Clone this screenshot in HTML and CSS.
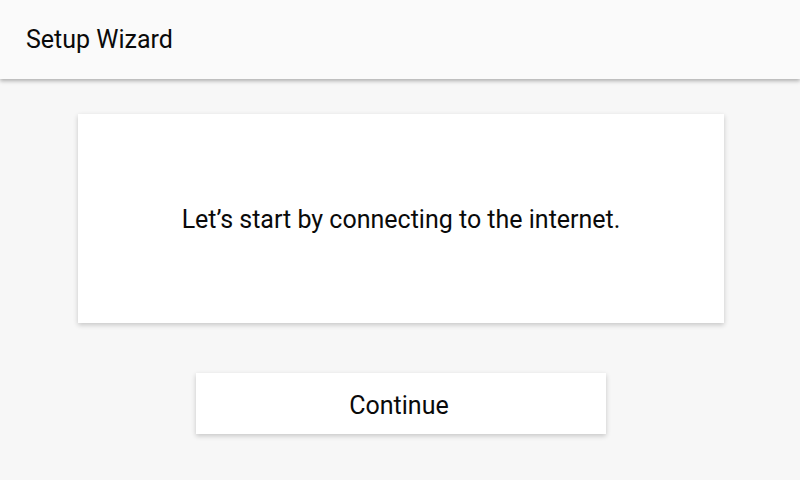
FILE: index.html
```html
<!DOCTYPE html>
<html lang="en">
<head>
  <meta charset="UTF-8">
  <title>Setup Wizard</title>
  <link rel="stylesheet" href="styles.css">
</head>
<body>
  <header class="appbar">
    <h1>Setup Wizard</h1>
  </header>
  <main class="content">
    <div class="card">
      <p>Let’s start by connecting to the internet.</p>
    </div>
    <button type="button" class="btn-continue">Continue</button>
  </main>
</body>
</html>
```
FILE: styles.css
```css
body {
  font-family: Roboto, 'Noto Sans', sans-serif;
  margin: 0;
  background-color: #f7f7f7;
  color: #0a0a0a;
  width: 800px;
  height: 480px;
  overflow: hidden;
}
.appbar {
  height: 79px;
  background: #fafafa;
  display: flex;
  align-items: center;
  padding-left: 26px;
  box-shadow: 0 2px 4px rgba(0, 0, 0, 0.3);
  position: relative;
}
.appbar h1 {
  margin: 0;
  font-size: 25px;
  font-weight: 400;
  color: #0a0a0a;
}
.content {
  display: flex;
  flex-direction: column;
  align-items: center;
  padding-top: 35px;
}
.card {
  width: 646px;
  height: 209px;
  background: #ffffff;
  box-shadow: 0 2px 5px rgba(0, 0, 0, 0.2);
  display: flex;
  align-items: center;
  justify-content: center;
  margin-left: 2px;
}
.card p {
  margin: 0;
  font-size: 25px;
  padding-top: 2px;
}
.btn-continue {
  margin-top: 50px;
  width: 410px;
  height: 61px;
  border: none;
  background: #ffffff;
  font-family: inherit;
  font-size: 25px;
  color: #0a0a0a;
  box-shadow: 0 2px 5px rgba(0, 0, 0, 0.2);
  cursor: pointer;
  margin-left: 2px;
  padding: 3px 4px 0 0;
}
```
